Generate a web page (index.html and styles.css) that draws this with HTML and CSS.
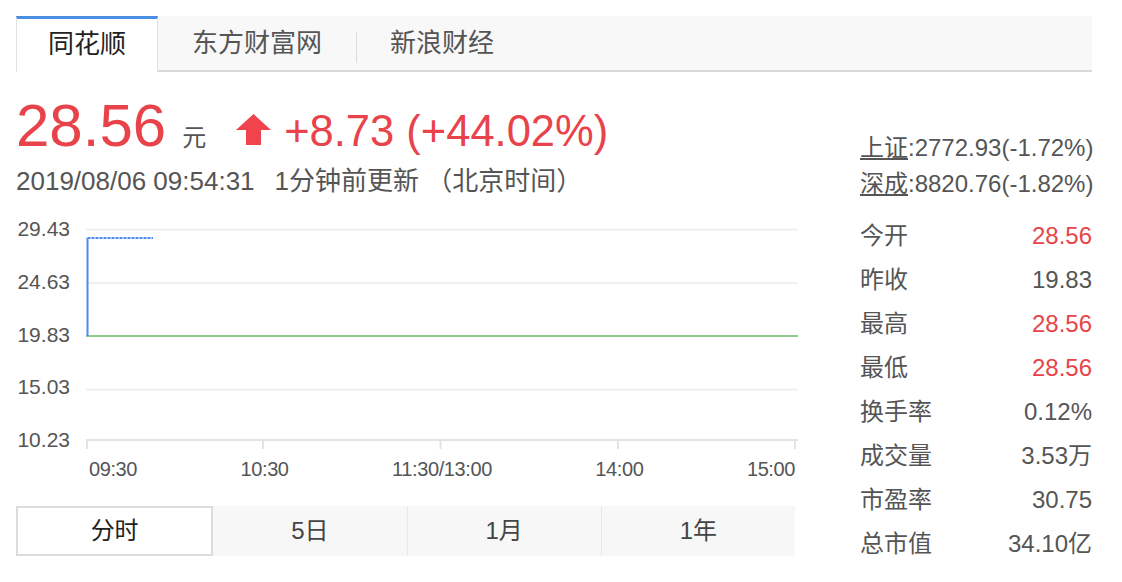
FILE: index.html
```html
<!DOCTYPE html>
<html lang="zh-CN">

<head>
    <meta charset="UTF-8">
    <meta name="viewport" content="width=device-width, initial-scale=1.0">
    <title>股票行情</title>
    <link rel="stylesheet" href="styles.css">
</head>

<body>

    <ul class="source-tabs">
        <li class="source-tab active">同花顺</li>
        <li class="source-tab">东方财富网</li>
        <li class="source-tab">新浪财经</li>
    </ul>

    <div class="quote">
        <div class="quote-main">
            <div class="price-row">
                <span class="price">28.56</span>
                <span class="unit">元</span>
                <svg class="up-arrow" width="35" height="31" viewBox="0 0 35 31">
                    <polygon points="0,16 17.5,0 35,16 25,16 25,31 10,31 10,16" fill="#f0434c"/>
                </svg>
                <span class="change">+8.73 (+44.02%)</span>
            </div>
            <div class="update-time">2019/08/06 09:54:31<span class="ago">1分钟前更新</span> （北京时间）</div>

            <div class="chart">
                <div class="y-axis">
                    <span>29.43</span>
                    <span>24.63</span>
                    <span>19.83</span>
                    <span>15.03</span>
                    <span>10.23</span>
                </div>
                <div class="plot-wrap">
                    <svg class="plot" width="712" height="222" viewBox="0 0 712 222">
                        <!-- grid -->
                        <line x1="0" y1="1.5" x2="712" y2="1.5" stroke="#ebebeb" stroke-width="1.5"/>
                        <line x1="0" y1="55" x2="712" y2="55" stroke="#ebebeb" stroke-width="1.5"/>
                        <line x1="0" y1="161.5" x2="712" y2="161.5" stroke="#ebebeb" stroke-width="1.5"/>
                        <!-- axis + ticks -->
                        <line x1="0" y1="212" x2="712" y2="212" stroke="#e3e3e3" stroke-width="2"/>
                        <line x1="1" y1="212" x2="1" y2="221" stroke="#e3e3e3" stroke-width="2"/>
                        <line x1="177" y1="212" x2="177" y2="221" stroke="#e3e3e3" stroke-width="2"/>
                        <line x1="354.5" y1="212" x2="354.5" y2="221" stroke="#e3e3e3" stroke-width="2"/>
                        <line x1="532" y1="212" x2="532" y2="221" stroke="#e3e3e3" stroke-width="2"/>
                        <line x1="709" y1="212" x2="709" y2="221" stroke="#e3e3e3" stroke-width="2"/>
                        <!-- prev close -->
                        <line x1="0" y1="108" x2="712" y2="108" stroke="#8fcb8f" stroke-width="2"/>
                        <!-- price -->
                        <polyline points="1.5,108 1.5,10" fill="none" stroke="#4b8bf5" stroke-width="2"/>
                        <line x1="1.5" y1="10" x2="67" y2="10" stroke="#4b8bf5" stroke-width="2" stroke-dasharray="3 1"/>
                    </svg>
                    <div class="x-axis">
                        <span>09:30</span>
                        <span>10:30</span>
                        <span>11:30/13:00</span>
                        <span>14:00</span>
                        <span>15:00</span>
                    </div>
                </div>
            </div>

            <ul class="range-tabs">
                <li class="range-tab active">分时</li>
                <li class="range-tab">5日</li>
                <li class="range-tab">1月</li>
                <li class="range-tab">1年</li>
            </ul>
        </div>

        <div class="quote-side">
            <div class="index-list">
                <div><span class="index-name">上证</span>:2772.93(-1.72%)</div>
                <div><span class="index-name">深成</span>:8820.76(-1.82%)</div>
            </div>
            <dl class="stats">
                <div class="stat"><dt>今开</dt><dd class="up">28.56</dd></div>
                <div class="stat"><dt>昨收</dt><dd>19.83</dd></div>
                <div class="stat"><dt>最高</dt><dd class="up">28.56</dd></div>
                <div class="stat"><dt>最低</dt><dd class="up">28.56</dd></div>
                <div class="stat"><dt>换手率</dt><dd>0.12%</dd></div>
                <div class="stat"><dt>成交量</dt><dd>3.53万</dd></div>
                <div class="stat"><dt>市盈率</dt><dd>30.75</dd></div>
                <div class="stat"><dt>总市值</dt><dd>34.10亿</dd></div>
            </dl>
        </div>
    </div>

</body>

</html>
```

FILE: styles.css
```css
body {
    margin: 0;
    padding: 16px 0 0 16px;
    font-family: "Liberation Sans", "Noto Sans CJK SC", sans-serif;
    color: #555;
    background-color: #fff;
}

ul, dl, dd {
    margin: 0;
    padding: 0;
    list-style: none;
}

/* source tabs */
.source-tabs {
    display: flex;
    width: 1076px;
    height: 54px;
    background-color: #f8f8f8;
    border-bottom: 2px solid #d9d9d9;
}

.source-tab {
    position: relative;
    padding: 0 34px;
    font-size: 26px;
    line-height: 54px;
    color: #555;
}

.source-tab + .source-tab:not(:nth-child(2))::before {
    content: "";
    position: absolute;
    left: 0;
    top: 16px;
    height: 31px;
    border-left: 1px solid #dcdcdc;
}

.source-tab.active {
    height: 53px;
    padding: 0 31px;
    margin-bottom: -2px;
    background-color: #fff;
    border-top: 3px solid #4a90e2;
    border-left: 1px solid #e3e3e3;
    border-right: 1px solid #e3e3e3;
    line-height: 51px;
    color: #222;
}

/* main area */
.quote {
    display: flex;
}

.quote-main {
    width: 782px;
    padding-top: 24px;
}

.price-row {
    display: flex;
    align-items: baseline;
    height: 60px;
}

.price {
    font-size: 60px;
    line-height: 60px;
    color: #e8434b;
}

.unit {
    margin-left: 16px;
    font-size: 24px;
}

.up-arrow {
    align-self: center;
    margin: 6px 13px 0 30px;
}

.change {
    font-size: 43.5px;
    color: #e8434b;
}

.update-time {
    margin-top: 10px;
    font-size: 26px;
    line-height: 30px;
}

.ago {
    margin-left: 20px;
}

/* chart */
.chart {
    display: flex;
    margin-top: 23px;
}

.y-axis {
    display: flex;
    flex-direction: column;
    justify-content: space-between;
    width: 54px;
    height: 231px;
    margin-right: 16px;
    font-size: 21px;
    line-height: 20px;
    text-align: right;
}

.plot-wrap {
    width: 712px;
    margin-top: 9px;
}

.plot {
    display: block;
}

.x-axis {
    display: flex;
    justify-content: space-between;
    padding: 0 3px 0 3px;
    margin-top: 9px;
    font-size: 20px;
    line-height: 20px;
    letter-spacing: -0.4px;
}

/* range tabs */
.range-tabs {
    display: flex;
    width: 779px;
    height: 50px;
    margin-top: 27px;
    background-color: #f7f7f7;
}

.range-tab {
    flex: 1;
    font-size: 24px;
    line-height: 50px;
    text-align: center;
    color: #444;
    border-left: 1px solid #e8e8e8;
}

.range-tab:nth-child(2) {
    border-left: none;
}

.range-tab.active {
    background-color: #fff;
    border: 2px solid #dcdcdc;
    line-height: 46px;
    color: #222;
}

/* right column */
.quote-side {
    width: 232px;
    margin-left: 62px;
    padding-top: 58px;
}

.index-list {
    font-size: 24px;
    line-height: 36px;
    white-space: nowrap;
}

.index-name {
    text-decoration: underline;
}

.stats {
    margin-top: 12px;
}

.stat {
    display: flex;
    justify-content: space-between;
    font-size: 24px;
    line-height: 44px;
}

.stat dd.up {
    color: #e8434b;
}
```
